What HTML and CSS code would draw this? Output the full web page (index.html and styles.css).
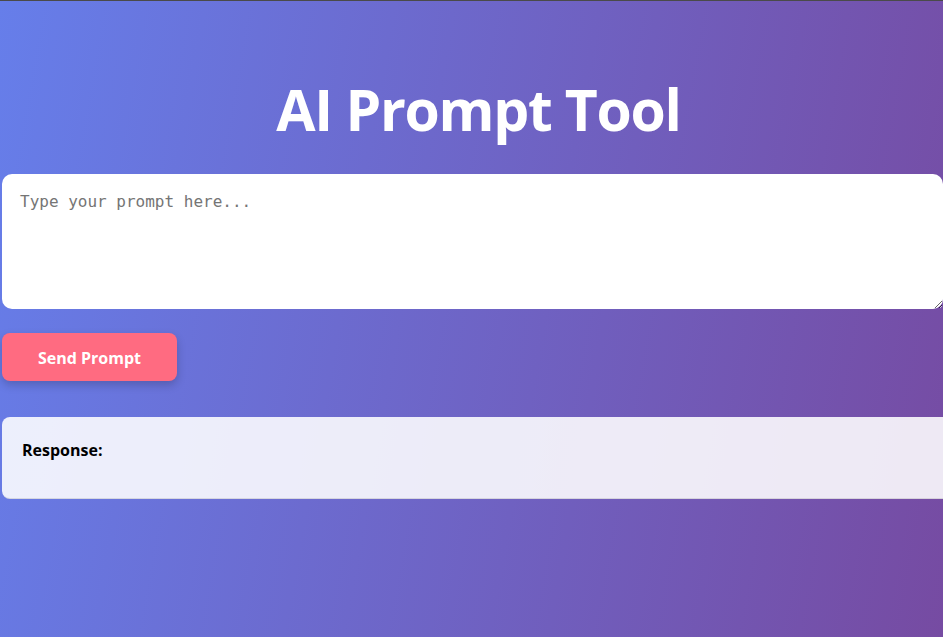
FILE: index.html
```html
<!DOCTYPE html>
<html lang="en">
<head>
<meta charset="utf-8">
<title>AI Prompt Tool</title>
<link rel="stylesheet" href="styles.css">
</head>
<body>
<div class="topline"></div>
<main class="container">
  <h1 class="title">AI Prompt Tool</h1>
  <textarea class="prompt" placeholder="Type your prompt here..."></textarea>
  <button class="send">Send Prompt</button>
  <div class="response"><strong>Response:</strong></div>
</main>
</body>
</html>
```
FILE: styles.css
```css
html, body {
  margin: 0;
  padding: 0;
  height: 100%;
  overflow: hidden;
}
body {
  background: linear-gradient(100deg, #667eea 0%, #764ba2 100%);
  font-family: "Open Sans", "Noto Sans", sans-serif;
}
.topline {
  height: 1px;
  background: #4a4a4a;
}
.container {
  width: 953px;
  margin-left: 2px;
  display: flex;
  flex-direction: column;
  align-items: flex-start;
}
.title {
  align-self: stretch;
  text-align: center;
  color: #fff;
  font-size: 57px;
  font-weight: 700;
  margin: 71px 0 0 0;
  height: 102px;
  line-height: 74px;
  letter-spacing: -1.3px;
}
.prompt {
  box-sizing: border-box;
  width: 941px;
  height: 135px;
  border: none;
  border-radius: 10px;
  padding: 18px 18px;
  font-family: "DejaVu Sans Mono", monospace;
  font-size: 16px;
  background: #fff;
  outline: none;
  display: block;
}
.prompt::placeholder {
  color: #757575;
}
.send {
  margin-top: 24px;
  width: 175px;
  height: 48px;
  border: none;
  border-radius: 8px;
  background: #ff6b81;
  color: #fff;
  font-family: "Open Sans", "Noto Sans", sans-serif;
  font-weight: 700;
  font-size: 16px;
  padding-top: 2px;
  box-shadow: 0 4px 10px rgba(0, 0, 0, 0.2);
}
.response {
  box-sizing: border-box;
  margin-top: 36px;
  width: 953px;
  height: 82px;
  background: rgba(255, 255, 255, 0.88);
  border-radius: 8px;
  border-bottom: 1px solid rgba(0, 0, 0, 0.1);
  padding: 22px 20px;
  font-size: 16px;
  color: #000;
}
.response strong {
  font-weight: 700;
}
```
